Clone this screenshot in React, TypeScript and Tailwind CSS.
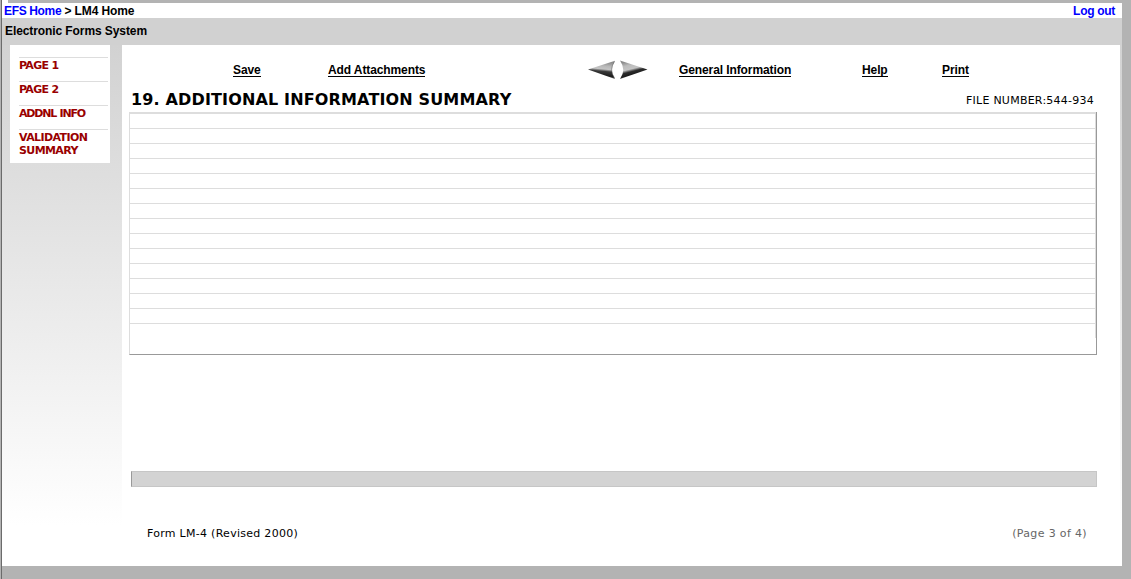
const navItems = [
  { label: "PAGE 1", className: "tracking-[-0.7px]" },
  { label: "PAGE 2", className: "tracking-[-0.7px]" },
  { label: "ADDNL INFO", className: "tracking-[-1.2px] [word-spacing:1px]" },
  { label: "VALIDATION SUMMARY", className: "tracking-[-0.6px]" },
];

const lines = Array.from({ length: 14 }, (_, index) => index);

const linkClass =
  "absolute top-[18px] border-b border-black leading-[14px] h-[14px] whitespace-nowrap tracking-[-0.1px]";

const Arrows = () => {
  return (
    <svg className="absolute left-[465px] top-[14px]" width="62" height="22" viewBox="0 0 62 22">
      <defs>
        <linearGradient id="left" gradientUnits="userSpaceOnUse" x1="17" y1="3" x2="15.5" y2="19">
          <stop offset="0" stopColor="#8c8c8c" />
          <stop offset="0.25" stopColor="#b8b8b8" />
          <stop offset="0.44" stopColor="#c4c4c4" />
          <stop offset="0.58" stopColor="#3a3a3a" />
          <stop offset="0.85" stopColor="#1c1c1c" />
          <stop offset="1" stopColor="#666666" />
        </linearGradient>
        <linearGradient id="right" gradientUnits="userSpaceOnUse" x1="42" y1="2" x2="46" y2="18">
          <stop offset="0" stopColor="#8c8c8c" />
          <stop offset="0.25" stopColor="#bcbcbc" />
          <stop offset="0.5" stopColor="#c4c4c4" />
          <stop offset="0.66" stopColor="#2c2c2c" />
          <stop offset="0.85" stopColor="#1c1c1c" />
          <stop offset="1" stopColor="#777777" />
        </linearGradient>
      </defs>
      <path d="M1 10.500 L28 1.800 Q21.500 11 28 20 Z" fill="url(#left)" />
      <path d="M27.500 2.500 Q21.800 11 27.500 19" fill="none" stroke="#444444" strokeOpacity="0.45" />
      <path d="M60.500 10.500 L33 1.500 Q39.500 11 33 20 Z" fill="url(#right)" />
    </svg>
  );
};

const Sidebar = () => {
  return (
    <nav className="w-[120px] shrink-0 pl-2">
      <ul className="w-[100px] h-[118px] bg-white pt-3 pl-[9px] pr-[2px] font-['DejaVu_Sans',sans-serif] text-[11px] font-bold leading-[13px] text-[#990000]">
        {navItems.map((item) => (
          <li key={item.label} className={`border-t border-[#dddddd] pt-px pb-[9px] ${item.className}`}>
            <a href="#">{item.label}</a>
          </li>
        ))}
      </ul>
    </nav>
  );
};

const Toolbar = () => {
  return (
    <div className="relative h-[45px] text-xs font-bold">
      <a href="#" className={`${linkClass} left-[111px]`}>
        Save
      </a>
      <a href="#" className={`${linkClass} left-[206px]`}>
        Add Attachments
      </a>
      <Arrows />
      <a href="#" className={`${linkClass} left-[557px]`}>
        General Information
      </a>
      <a href="#" className={`${linkClass} left-[740px]`}>
        Help
      </a>
      <a href="#" className={`${linkClass} left-[820px]`}>
        Print
      </a>
    </div>
  );
};

const App = () => {
  return (
    <div className="flex h-[579px] w-[1131px] overflow-hidden bg-[#b3b3b3] font-['Liberation_Sans',Arial,sans-serif] text-black">
      <div className="w-[2px] shrink-0 bg-[#b3b3b3] border-r border-[#6b6b6b]" />
      <div className="w-[1120px] shrink-0">
        <div className="h-[3px] w-[6px] bg-white" />
        <header className="h-[15px] flex justify-between bg-white pl-[2px] pr-[7px] text-xs leading-[16px] font-bold">
          <div className="tracking-[-0.12px]">
            <a href="#" className="text-[#0000ff] tracking-[-0.35px]">
              EFS Home
            </a>{" "}
            &gt; LM4 Home
          </div>
          <a href="#" className="text-[#0000ff] tracking-[-0.3px]">
            Log out
          </a>
        </header>
        <div className="h-[27px] bg-[#d1d1d1] pl-[3px] text-xs leading-[26px] font-bold tracking-[-0.09px]">
          Electronic Forms System
        </div>
        <div className="flex h-[521px] bg-linear-to-b from-[#d2d2d2] to-white to-[480px]">
          <Sidebar />
          <main className="w-[998px] bg-white">
            <Toolbar />
            <div className="flex h-[22px] justify-between pl-[9px] pr-[26px] font-['DejaVu_Sans',sans-serif]">
              <h1 className="text-base leading-[19px] font-bold whitespace-nowrap tracking-[0.15px]">
                19. ADDITIONAL INFORMATION SUMMARY
              </h1>
              <span className="text-[11px] leading-[21px] whitespace-nowrap tracking-[0.24px]">
                FILE NUMBER:544-934
              </span>
            </div>
            <div className="ml-[7px] h-[243px] w-[968px] border-l border-r border-b border-l-[#dddddd] border-r-[#999999] border-b-[#999999]">
              <div className="h-[226px] border-r border-t-2 border-[#dddddd]">
                {lines.map((line) => (
                  <div key={line} className="h-[15px] border-b border-[#dddddd]" />
                ))}
              </div>
            </div>
            <div className="mt-[116px] ml-[9px] h-4 w-[966px] border border-[#c6c6c6] border-l-[#999999] bg-[#d3d3d3]" />
            <footer className="mt-10 flex justify-between pl-[25px] pr-[33px] font-['DejaVu_Sans',sans-serif] text-[11px] leading-[14px] tracking-[0.28px]">
              <span>Form LM-4 (Revised 2000)</span>
              <span className="text-[#666666] tracking-[0.35px]">(Page 3 of 4)</span>
            </footer>
          </main>
        </div>
      </div>
    </div>
  );
};

export default App;
